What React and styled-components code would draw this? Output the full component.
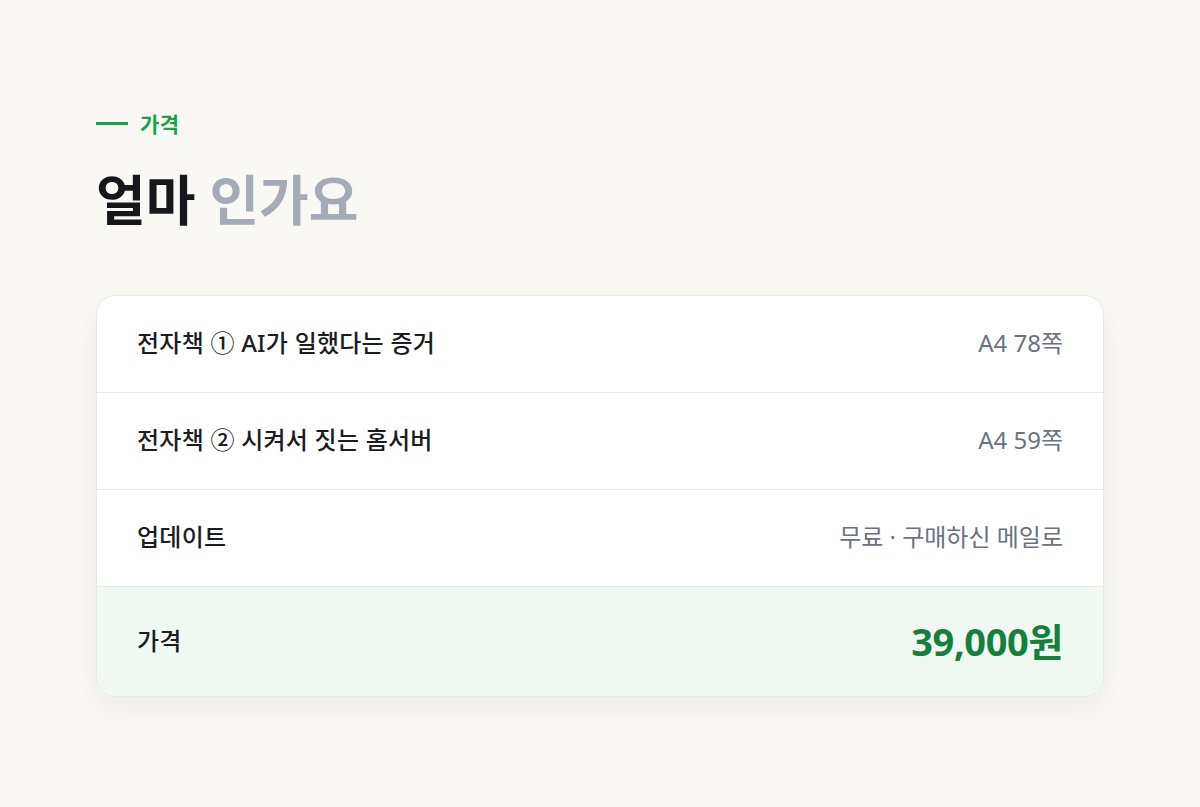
import React from "react";
import styled, { createGlobalStyle } from "styled-components";

const GlobalStyle = createGlobalStyle`
    html, body {
        margin: 0;
        padding: 0;
        background: #f9f8f5;
    }
    body {
        font-family: "Noto Sans", "Noto Sans CJK KR", sans-serif;
        color: #15171a;
    }
`

const Section = styled.section`
    min-height: 807px;
    box-sizing: border-box;
    padding: 109px 96px 80px;
`

const Eyebrow = styled.div`
    display: flex;
    align-items: center;
    gap: 12px;
    height: 28px;
    color: #16a34a;
    font-size: 21px;
    font-weight: 700;
    letter-spacing: 0.02em;
    &::before {
        content: "";
        width: 32px;
        height: 3px;
        background: #16a34a;
    }
`

const Title = styled.h2`
    margin: 28px 0 0;
    font-size: 54px;
    line-height: 70px;
    font-weight: 700;
    color: #15171a;
`

const Muted = styled.span`
    color: #a5abb6;
`

const Card = styled.div`
    margin-top: 60px;
    background: #fff;
    border: 1px solid #ebe8e1;
    border-radius: 20px;
    overflow: hidden;
    box-shadow: 0 12px 32px rgba(40, 34, 20, 0.06);
`

const Row = styled.div`
    display: flex;
    align-items: center;
    justify-content: space-between;
    box-sizing: border-box;
    padding: 0 40px 5px;
    height: ${p => (p.$total ? "109px" : "97px")};
    background: ${p => (p.$total ? "#f0f8f2" : "#fff")};
    border-bottom: ${p => (p.$total ? "none" : "1px solid #ece9e3")};
`

const Label = styled.span`
    font-size: 24px;
    font-weight: 500;
    color: #1b1d21;
    letter-spacing: 0.01em;
`

const Value = styled.span`
    font-size: 24px;
    font-weight: 400;
    color: #6b7280;
`

const Price = styled.span`
    font-size: 38px;
    font-weight: 700;
    color: #15803d;
    letter-spacing: -0.01em;
`

const items = [
    { label: "전자책 ① AI가 일했다는 증거", value: "A4 78쪽" },
    { label: "전자책 ② 시켜서 짓는 홈서버", value: "A4 59쪽" },
    { label: "업데이트", value: "무료 · 구매하신 메일로" },
]

const App = () => {
    return (
        <>
            <GlobalStyle />
            <Section>
                <Eyebrow>가격</Eyebrow>
                <Title>얼마 <Muted>인가요</Muted></Title>
                <Card>
                    {items.map((item) => (
                        <Row key={item.label}>
                            <Label>{item.label}</Label>
                            <Value>{item.value}</Value>
                        </Row>
                    ))}
                    <Row $total>
                        <Label>가격</Label>
                        <Price>39,000원</Price>
                    </Row>
                </Card>
            </Section>
        </>
    )
}

export default App;
